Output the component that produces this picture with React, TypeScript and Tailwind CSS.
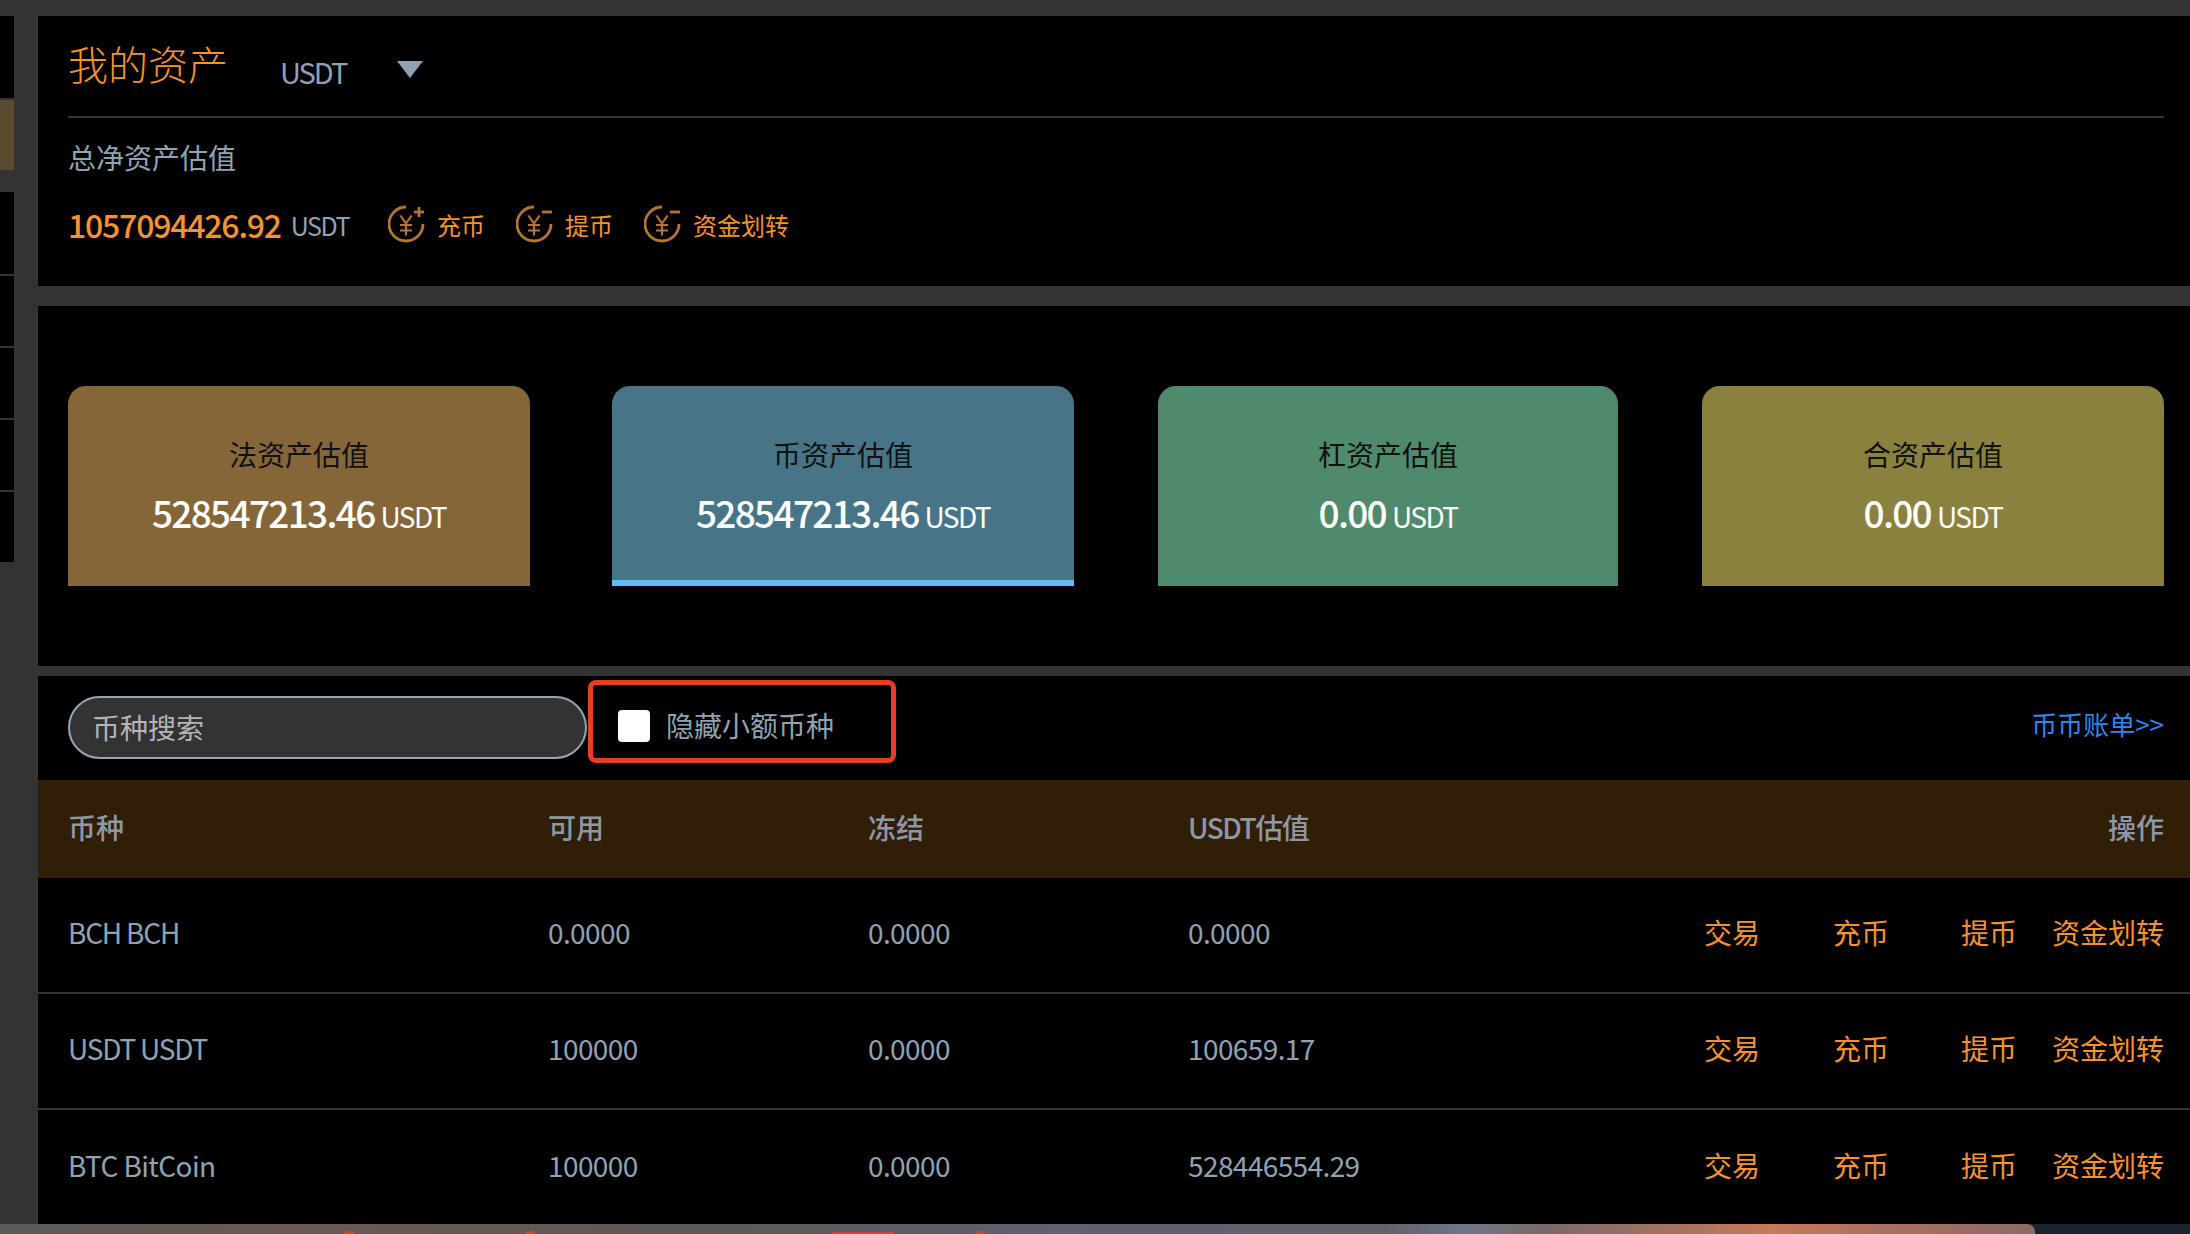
import React from 'react';

const cn = "font-['Noto_Sans_CJK_SC','Noto_Sans',sans-serif]";

const YenIcon = ({ plus }: { plus?: boolean }) => (
  <svg viewBox="0 0 38 38" className="w-[38px] h-[38px] shrink-0" fill="none" stroke="#b3752f" strokeWidth="2.8">
    <path d="M18 2 A17 17 0 1 0 35 19" />
    <path d="M12.5 10.5l5.5 8 5.500-8M18 18.500v12M12 20h12M12 25.500h12" strokeWidth="2.2" />
    <path d="M26 7h10" />
    {plus && <path d="M31 2v10" />}
  </svg>
);

const cards = [
  { title: '法资产估值', value: '528547213.46', bg: 'bg-[#846638]', box: 'w-[462px]', active: false },
  { title: '币资产估值', value: '528547213.46', bg: 'bg-[#477587]', box: 'w-[462px] ml-[82px]', active: true },
  { title: '杠资产估值', value: '0.00', bg: 'bg-[#4f8a6c]', box: 'w-[460px] ml-[84px]', active: false },
  { title: '合资产估值', value: '0.00', bg: 'bg-[#8a813f]', box: 'w-[462px] ml-[84px]', active: false },
];

const rows = [
  { name: 'BCH BCH', nameCls: 'tracking-[-1.2px]', free: '0.0000', frozen: '0.0000', value: '0.0000' },
  { name: 'USDT USDT', nameCls: 'tracking-[-1.2px]', free: '100000', frozen: '0.0000', value: '100659.17' },
  { name: 'BTC BitCoin', nameCls: '', free: '100000', frozen: '0.0000', value: '528446554.29' },
];

const Sidebar = () => (
  <div className="w-[14px] shrink-0 flex flex-col">
    <div className="h-[82px] bg-black" />
    <div className="h-[70px] mt-[2px] bg-[#5a4a30]" />
    <div className="h-[82px] mt-[22px] bg-black" />
    <div className="h-[70px] mt-[2px] bg-black" />
    <div className="h-[70px] mt-[2px] bg-black" />
    <div className="h-[70px] mt-[2px] bg-black" />
    <div className="h-[70px] mt-[2px] bg-black" />
  </div>
);

const Wallpaper = () => (
  <div className="h-[10px] shrink-0 bg-[#1a2430]">
    <div className="relative h-full w-[2035px] rounded-tr-[8px] bg-[linear-gradient(90deg,#5a5a5a_0%,#6b5a55_14%,#5c5858_34%,#5f6070_52%,#60616a_68%,#6f7488_72%,#7a6a6a_76%,#c67a58_87%,#a87060_93%,#8c6a66_100%)]">
      <span className="absolute bottom-0 left-[344px] w-[10px] h-[3px] rounded-t-full bg-[#d8402f]" />
      <span className="absolute bottom-0 left-[525px] w-[10px] h-[3px] rounded-t-full bg-[#d8402f]" />
      <span className="absolute bottom-0 left-[832px] w-[62px] h-[2px] rounded-t-[2px] bg-[#d8402f]" />
      <span className="absolute bottom-0 left-[975px] w-[10px] h-[3px] rounded-t-full bg-[#d8402f]" />
    </div>
  </div>
);

export default function App() {
  return (
    <div className={`${cn} w-[2190px] h-[1234px] bg-[#333333] overflow-hidden flex flex-col pt-[16px]`}>
      <div className="flex flex-1 min-h-0">
        <Sidebar />
        <div className="ml-[24px] flex-1 flex flex-col min-w-0">
          {/* overview */}
          <section className="h-[270px] bg-black pl-[30px] pr-[26px]">
            <div className="h-[102px] border-b-2 border-[#333333] flex items-center">
              <h1 className="text-[40px] font-light text-[#f7922e] w-[212px] leading-none mt-[-6px]">我的资产</h1>
              <span className="text-[29px] text-[#8fa3b3] tracking-[-2px] w-[117px] leading-none mt-[10px]">USDT</span>
              <svg viewBox="0 0 26 17" className="w-[26px] h-[17px] mt-[7px]"><path d="M0 0h26L13 17z" fill="#8fa3b3" /></svg>
            </div>
            <div className="text-[28px] text-[#8fa3b3] leading-none mt-[25px]">总净资产估值</div>
            <div className="flex items-center mt-[33px] h-[40px]">
              <div className="w-[320px] flex items-center">
                <span className="text-[32px] font-medium text-[#f7922e] tracking-[-1.2px]">1057094426.92</span>
                <span className="text-[25px] text-[#8fa3b3] ml-[10px] tracking-[-1.5px] mt-[3px]">USDT</span>
              </div>
              <YenIcon plus />
              <span className="text-[24px] text-[#f7922e] ml-[11px] w-[79px] mt-[2px]">充币</span>
              <YenIcon />
              <span className="text-[24px] text-[#f7922e] ml-[11px] w-[79px] mt-[2px]">提币</span>
              <YenIcon />
              <span className="text-[24px] text-[#f7922e] ml-[11px] mt-[2px]">资金划转</span>
            </div>
          </section>

          {/* account cards */}
          <section className="mt-[20px] h-[360px] bg-black pl-[30px] pr-[26px] flex items-center">
            {cards.map((c) => (
              <div
                key={c.title}
                className={`${c.bg} ${c.box} h-[200px] rounded-t-[18px] flex flex-col items-center pt-[54px] ${c.active ? 'border-b-[6px] border-[#5bbef5]' : ''}`}
              >
                <div className="text-[28px] text-[#111111] leading-none">{c.title}</div>
                <div className="mt-[26px] leading-none text-white">
                  <span className="text-[37px] font-medium tracking-[-1.7px]">{c.value}</span>
                  <span className="text-[28px] ml-[6px] tracking-[-1.6px]">USDT</span>
                </div>
              </div>
            ))}
          </section>

          {/* asset list */}
          <section className="mt-[10px] flex-1 bg-black min-h-0">
            <div className="h-[104px] pl-[30px] pr-[26px] flex items-start">
              <div className="w-[519px] h-[63px] mt-[20px] pb-[2px] rounded-full border-2 border-[#95a5b5] bg-[#333333] flex items-center pl-[22px] text-[28px] text-[#b5b5b5]">
                币种搜索
              </div>
              <div className="w-[308px] h-[83px] mt-[4px] ml-[1px] border-[5px] border-[#ea3e23] rounded-[8px] flex items-center pl-[25px]">
                <span className="w-[32px] h-[32px] rounded-[4px] bg-white mt-[9px]" />
                <span className="ml-[16px] text-[28px] text-[#8fa3b3] mt-[7px]">隐藏小额币种</span>
              </div>
              <a className="ml-auto text-[26px] text-[#2f86f0] mt-[28px]">币币账单&gt;&gt;</a>
            </div>
            <div className="h-[98px] bg-[#311e07] pl-[30px] pr-[26px] pb-[5px] flex items-center text-[28px] font-medium text-[#8c99a5]">
              <span className="w-[480px]">币种</span>
              <span className="w-[320px]">可用</span>
              <span className="w-[320px]">冻结</span>
              <span className="tracking-[-1.5px]">USDT估值</span>
              <span className="ml-auto">操作</span>
            </div>
            {rows.map((r, i) => (
              <div
                key={r.name}
                className={`h-[116px] pl-[30px] pr-[26px] pb-[6px] flex items-center text-[28px] text-[#8fa3b3] tracking-[-0.6px] ${i < rows.length - 1 ? 'border-b-2 border-[#333333]' : ''}`}
              >
                <span className={`w-[480px] ${r.nameCls}`}>{r.name}</span>
                <span className="w-[320px]">{r.free}</span>
                <span className="w-[320px]">{r.frozen}</span>
                <span>{r.value}</span>
                <div className="ml-auto flex text-[#f7922e] tracking-normal">
                  <a>交易</a>
                  <a className="ml-[73px]">充币</a>
                  <a className="ml-[72px]">提币</a>
                  <a className="ml-[35px]">资金划转</a>
                </div>
              </div>
            ))}
          </section>
        </div>
      </div>
      <Wallpaper />
    </div>
  );
}
